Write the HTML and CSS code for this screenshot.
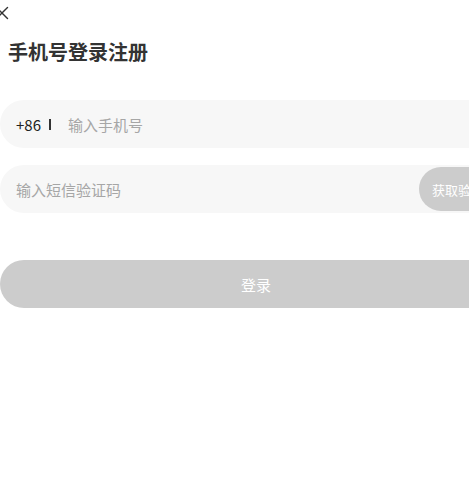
FILE: index.html
```html
<!DOCTYPE html>
<html lang="zh-CN">
<head>
<meta charset="utf-8">
<title>手机号登录注册</title>
<link rel="stylesheet" href="styles.css">
</head>
<body>
<div class="page">
  <div class="header">
    <svg class="close" viewBox="0 0 14 14" width="14" height="14" aria-label="关闭">
      <path d="M1.5 1.5 L12.5 12.5 M12.5 1.5 L1.5 12.5" stroke="#333" stroke-width="1.4" stroke-linecap="round" fill="none"/>
    </svg>
  </div>
  <h1 class="title">手机号登录注册</h1>
  <div class="field phone">
    <span class="prefix">+86</span>
    <span class="sep"></span>
    <input class="input" type="tel" placeholder="输入手机号">
  </div>
  <div class="field code">
    <input class="input" type="text" placeholder="输入短信验证码">
    <button class="get-code" type="button">获取验证码</button>
  </div>
  <button class="login" type="button">登录</button>
</div>
</body>
</html>
```
FILE: styles.css
```css
html, body {
  margin: 0;
  padding: 0;
  background: #ffffff;
  overflow: hidden;
}
body {
  font-family: "Noto Sans CJK SC", "Noto Sans", sans-serif;
  color: #333333;
}
.page {
  width: 512px;
  display: flex;
  flex-direction: column;
}
.header {
  height: 25px;
  display: flex;
  align-items: center;
}
.close {
  display: block;
  margin-left: -5px;
}
.title {
  margin: 13px 0 0 8px;
  font-size: 20px;
  line-height: 28px;
  font-weight: 700;
  color: #333333;
}
.field {
  height: 48px;
  border-radius: 24px;
  background: #f7f7f7;
  display: flex;
  align-items: center;
  box-sizing: border-box;
}
.phone {
  margin-top: 34px;
  padding-left: 16px;
}
.code {
  margin-top: 17px;
  padding-left: 16px;
  padding-right: 2px;
}
.prefix {
  font-size: 15px;
  color: #222222;
}
.sep {
  width: 2px;
  height: 11px;
  background: #333333;
  margin: 0 17px 0 8px;
}
.input {
  flex: 1;
  min-width: 0;
  border: none;
  outline: none;
  background: transparent;
  font-family: inherit;
  font-size: 15px;
  color: #333333;
  padding: 0;
  height: 24px;
}
.input::placeholder {
  color: #a6a6a6;
}
.get-code {
  height: 44px;
  border: none;
  border-radius: 22px;
  background: #cccccc;
  color: #ffffff;
  font-family: inherit;
  font-size: 13px;
  padding: 0 13px;
  white-space: nowrap;
}
.login {
  margin-top: 47px;
  height: 48px;
  border: none;
  border-radius: 24px;
  background: #cccccc;
  color: #ffffff;
  font-family: inherit;
  font-size: 15px;
  width: 512px;
  padding: 0;
}
```
